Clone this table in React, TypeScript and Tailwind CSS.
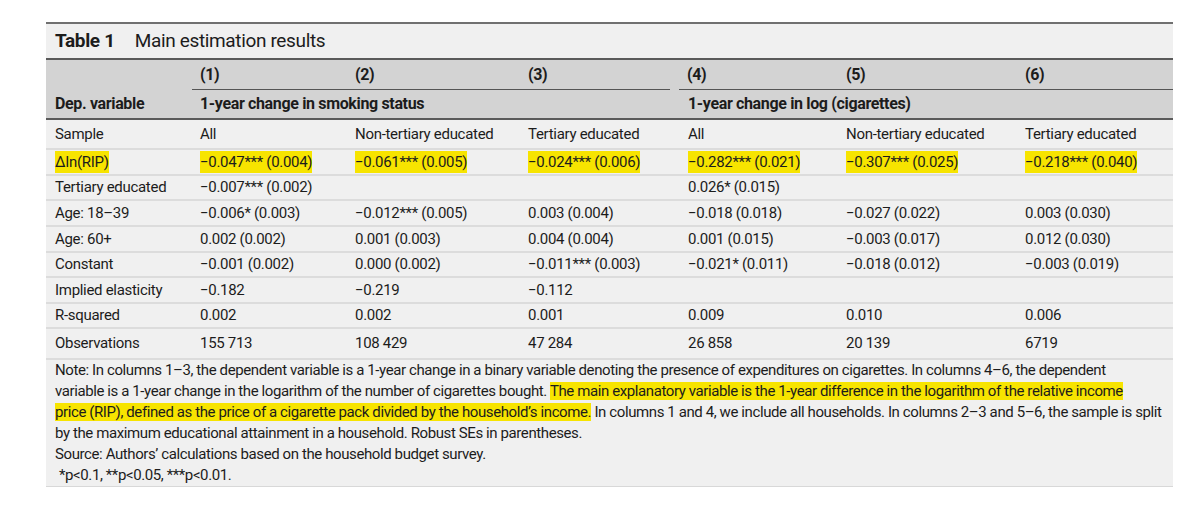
import React from 'react';

const cols = 'grid grid-cols-[146px_155px_173px_160px_158px_179px_156px]';

const Hi: React.FC<{ children: React.ReactNode }> = ({ children }) => (
  <span className="bg-[#f7e400]">{children}</span>
);

type Row = { label: React.ReactNode; cells: React.ReactNode[]; h: string };

const rows: Row[] = [
  {
    label: 'Sample',
    cells: ['All', 'Non-tertiary educated', 'Tertiary educated', 'All', 'Non-tertiary educated', 'Tertiary educated'],
    h: 'h-[30px]',
  },
  {
    label: <Hi>ΔIn(RIP)</Hi>,
    cells: [
      <Hi>−0.047*** (0.004)</Hi>,
      <Hi>−0.061*** (0.005)</Hi>,
      <Hi>−0.024*** (0.006)</Hi>,
      <Hi>−0.282*** (0.021)</Hi>,
      <Hi>−0.307*** (0.025)</Hi>,
      <Hi>−0.218*** (0.040)</Hi>,
    ],
    h: 'h-[26px]',
  },
  { label: 'Tertiary educated', cells: ['−0.007*** (0.002)', '', '', '0.026* (0.015)', '', ''], h: 'h-[25px]' },
  {
    label: 'Age: 18–39',
    cells: ['−0.006* (0.003)', '−0.012*** (0.005)', '0.003 (0.004)', '−0.018 (0.018)', '−0.027 (0.022)', '0.003 (0.030)'],
    h: 'h-[26px]',
  },
  {
    label: 'Age: 60+',
    cells: ['0.002 (0.002)', '0.001 (0.003)', '0.004 (0.004)', '0.001 (0.015)', '−0.003 (0.017)', '0.012 (0.030)'],
    h: 'h-[26px]',
  },
  {
    label: 'Constant',
    cells: ['−0.001 (0.002)', '0.000 (0.002)', '−0.011*** (0.003)', '−0.021* (0.011)', '−0.018 (0.012)', '−0.003 (0.019)'],
    h: 'h-[25px]',
  },
  { label: 'Implied elasticity', cells: ['−0.182', '−0.219', '−0.112', '', '', ''], h: 'h-[26px]' },
  { label: 'R-squared', cells: ['0.002', '0.002', '0.001', '0.009', '0.010', '0.006'], h: 'h-[25px]' },
  { label: 'Observations', cells: ['155 713', '108 429', '47 284', '26 858', '20 139', '6719'], h: 'h-[31px]' },
];

const App: React.FC = () => {
  return (
    <div
      className="w-[1200px] h-[511px] bg-white pt-[22px] pl-[46px] text-[#1c1c1c] overflow-hidden tracking-[-0.3px]"
      style={{ fontFamily: 'Roboto, "Liberation Sans", sans-serif' }}
    >
      <div className="w-[1127px] bg-[#f0f0f0] text-[15px]">
        {/* title */}
        <div className="h-[38px] border-t-2 border-b-2 border-t-[#707070] border-b-[#5a5a5a] flex items-center pl-[9px] tracking-[-0.35px]">
          <span className="font-bold text-[19px] mr-[20px]">Table 1</span>
          <span className="text-[19px]">Main estimation results</span>
        </div>

        {/* column numbers */}
        <div className={`${cols} h-[30px] bg-[#d3d3d3] font-bold text-[16px] tracking-[-0.35px]`}>
          <div />
          <div className="border-b border-[#555] flex items-center pl-[8px]">(1)</div>
          <div className="border-b border-[#555] flex items-center pl-[8px]">(2)</div>
          <div className="border-b border-[#555] flex items-center pl-[8px] mr-[10px]">(3)</div>
          <div className="border-b border-[#555] flex items-center pl-[8px] -ml-px">(4)</div>
          <div className="border-b border-[#555] flex items-center pl-[8px]">(5)</div>
          <div className="border-b border-[#555] flex items-center pl-[8px]">(6)</div>
        </div>

        {/* dep variable */}
        <div
          className={`${cols} h-[30px] bg-[#d3d3d3] font-bold text-[16px] tracking-[-0.35px] border-b-2 border-[#5a5a5a]`}
        >
          <div className="flex items-center pl-[9px]">Dep. variable</div>
          <div className="col-span-3 flex items-center pl-[8px]">1-year change in smoking status</div>
          <div className="col-span-3 flex items-center pl-[8px]">1-year change in log (cigarettes)</div>
        </div>

        {/* body */}
        {rows.map((r, i) => (
          <div key={i} className={`${cols} ${r.h} border-b-2 border-[#dcdcdc]`}>
            <div className="flex items-center pl-[9px] whitespace-nowrap">{r.label}</div>
            {r.cells.map((c, j) => (
              <div key={j} className="flex items-center pl-[8px] whitespace-nowrap">
                {c}
              </div>
            ))}
          </div>
        ))}

        {/* notes */}
        <div className="pl-[9px] leading-[21px] border-b border-[#d8d8d8] whitespace-nowrap tracking-[-0.4px]">
          Note: In columns 1–3, the dependent variable is a 1-year change in a binary variable denoting the presence of
          expenditures on cigarettes. In columns 4–6, the dependent
          <br />
          variable is a 1-year change in the logarithm of the number of cigarettes bought.{' '}
          <Hi>The main explanatory variable is the 1-year difference in the logarithm of the relative income</Hi>
          <br />
          <Hi>price (RIP), defined as the price of a cigarette pack divided by the household’s income.</Hi> In columns
          1 and 4, we include all households. In columns 2–3 and 5–6, the sample is split
          <br />
          by the maximum educational attainment in a household. Robust SEs in parentheses.
          <br />
          Source: Authors’ calculations based on the household budget survey.
          <br />
          <span className="pl-[4px]">*p&lt;0.1, **p&lt;0.05, ***p&lt;0.01.</span>
        </div>
      </div>
    </div>
  );
};

export default App;
